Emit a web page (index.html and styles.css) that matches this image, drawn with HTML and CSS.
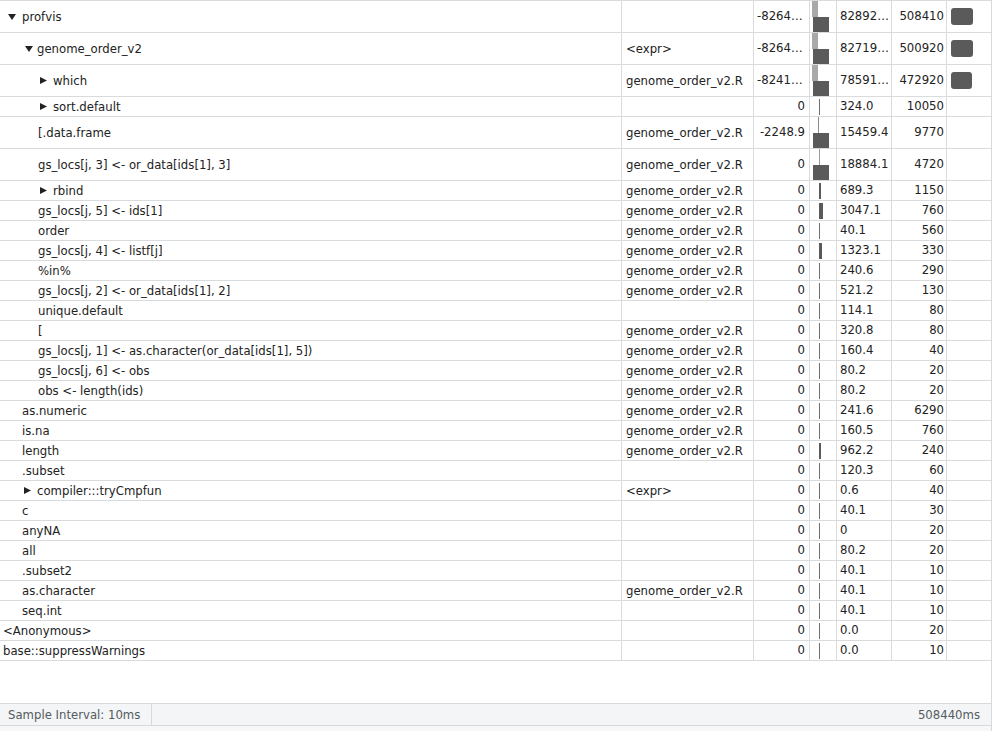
FILE: index.html
```html
<!DOCTYPE html>
<html>
<head>
<meta charset="utf-8">
<link rel="stylesheet" href="styles.css">
</head>
<body>
<div class="app">
  <div class="tree">
    <div class="row tall">
      <div class="c name l0"><svg class="tri-d tri-d0" width="8" height="6" viewBox="0 0 8 6"><polygon points="0,0 8,0 4,6"/></svg>profvis</div>
      <div class="c file"></div>
      <div class="c num">-82641.7</div>
      <div class="c mem"><span class="neg neg-wide"></span><span class="pos-block"></span></div>
      <div class="c val">828926.4</div>
      <div class="c num2">508410</div>
      <div class="c time"><span class="tbar"></span></div>
    </div>
    <div class="row tall">
      <div class="c name l1"><svg class="tri-d" width="8" height="6" viewBox="0 0 8 6"><polygon points="0,0 8,0 4,6"/></svg>genome_order_v2</div>
      <div class="c file">&lt;expr&gt;</div>
      <div class="c num">-82641.7</div>
      <div class="c mem"><span class="neg neg-wide"></span><span class="pos-block"></span></div>
      <div class="c val">827193.5</div>
      <div class="c num2">500920</div>
      <div class="c time"><span class="tbar"></span></div>
    </div>
    <div class="row tall">
      <div class="c name l2"><svg class="tri-r" width="7" height="7" viewBox="0 0 7 7"><polygon points="0,0 7,3.5 0,7"/></svg>which</div>
      <div class="c file">genome_order_v2.R</div>
      <div class="c num">-82417.2</div>
      <div class="c mem"><span class="neg neg-wide"></span><span class="pos-block"></span></div>
      <div class="c val">785912.3</div>
      <div class="c num2">472920</div>
      <div class="c time"><span class="tbar tbar-s"></span></div>
    </div>
    <div class="row">
      <div class="c name l2"><svg class="tri-r" width="7" height="7" viewBox="0 0 7 7"><polygon points="0,0 7,3.5 0,7"/></svg>sort.default</div>
      <div class="c file"></div>
      <div class="c num">0</div>
      <div class="c mem"><span class="pos w1"></span></div>
      <div class="c val">324.0</div>
      <div class="c num2">10050</div>
      <div class="c time"></div>
    </div>
    <div class="row tall">
      <div class="c name l2">[.data.frame</div>
      <div class="c file">genome_order_v2.R</div>
      <div class="c num">-2248.9</div>
      <div class="c mem"><span class="neg neg-thin"></span><span class="pos-block"></span></div>
      <div class="c val">15459.4</div>
      <div class="c num2">9770</div>
      <div class="c time"></div>
    </div>
    <div class="row tall">
      <div class="c name l2">gs_locs[j, 3] &lt;- or_data[ids[1], 3]</div>
      <div class="c file">genome_order_v2.R</div>
      <div class="c num">0</div>
      <div class="c mem"><span class="neg neg-zero"></span><span class="pos-block"></span></div>
      <div class="c val">18884.1</div>
      <div class="c num2">4720</div>
      <div class="c time"></div>
    </div>
    <div class="row">
      <div class="c name l2"><svg class="tri-r" width="7" height="7" viewBox="0 0 7 7"><polygon points="0,0 7,3.5 0,7"/></svg>rbind</div>
      <div class="c file">genome_order_v2.R</div>
      <div class="c num">0</div>
      <div class="c mem"><span class="pos w2"></span></div>
      <div class="c val">689.3</div>
      <div class="c num2">1150</div>
      <div class="c time"></div>
    </div>
    <div class="row">
      <div class="c name l2">gs_locs[j, 5] &lt;- ids[1]</div>
      <div class="c file">genome_order_v2.R</div>
      <div class="c num">0</div>
      <div class="c mem"><span class="pos w4"></span></div>
      <div class="c val">3047.1</div>
      <div class="c num2">760</div>
      <div class="c time"></div>
    </div>
    <div class="row">
      <div class="c name l2">order</div>
      <div class="c file">genome_order_v2.R</div>
      <div class="c num">0</div>
      <div class="c mem"><span class="pos w1"></span></div>
      <div class="c val">40.1</div>
      <div class="c num2">560</div>
      <div class="c time"></div>
    </div>
    <div class="row">
      <div class="c name l2">gs_locs[j, 4] &lt;- listf[j]</div>
      <div class="c file">genome_order_v2.R</div>
      <div class="c num">0</div>
      <div class="c mem"><span class="pos w3"></span></div>
      <div class="c val">1323.1</div>
      <div class="c num2">330</div>
      <div class="c time"></div>
    </div>
    <div class="row">
      <div class="c name l2">%in%</div>
      <div class="c file">genome_order_v2.R</div>
      <div class="c num">0</div>
      <div class="c mem"><span class="pos w1"></span></div>
      <div class="c val">240.6</div>
      <div class="c num2">290</div>
      <div class="c time"></div>
    </div>
    <div class="row">
      <div class="c name l2">gs_locs[j, 2] &lt;- or_data[ids[1], 2]</div>
      <div class="c file">genome_order_v2.R</div>
      <div class="c num">0</div>
      <div class="c mem"><span class="pos w1"></span></div>
      <div class="c val">521.2</div>
      <div class="c num2">130</div>
      <div class="c time"></div>
    </div>
    <div class="row">
      <div class="c name l2">unique.default</div>
      <div class="c file"></div>
      <div class="c num">0</div>
      <div class="c mem"><span class="pos w1"></span></div>
      <div class="c val">114.1</div>
      <div class="c num2">80</div>
      <div class="c time"></div>
    </div>
    <div class="row">
      <div class="c name l2">[</div>
      <div class="c file">genome_order_v2.R</div>
      <div class="c num">0</div>
      <div class="c mem"><span class="pos w1"></span></div>
      <div class="c val">320.8</div>
      <div class="c num2">80</div>
      <div class="c time"></div>
    </div>
    <div class="row">
      <div class="c name l2">gs_locs[j, 1] &lt;- as.character(or_data[ids[1], 5])</div>
      <div class="c file">genome_order_v2.R</div>
      <div class="c num">0</div>
      <div class="c mem"><span class="pos w1"></span></div>
      <div class="c val">160.4</div>
      <div class="c num2">40</div>
      <div class="c time"></div>
    </div>
    <div class="row">
      <div class="c name l2">gs_locs[j, 6] &lt;- obs</div>
      <div class="c file">genome_order_v2.R</div>
      <div class="c num">0</div>
      <div class="c mem"><span class="pos w1"></span></div>
      <div class="c val">80.2</div>
      <div class="c num2">20</div>
      <div class="c time"></div>
    </div>
    <div class="row">
      <div class="c name l2">obs &lt;- length(ids)</div>
      <div class="c file">genome_order_v2.R</div>
      <div class="c num">0</div>
      <div class="c mem"><span class="pos w1"></span></div>
      <div class="c val">80.2</div>
      <div class="c num2">20</div>
      <div class="c time"></div>
    </div>
    <div class="row">
      <div class="c name l1">as.numeric</div>
      <div class="c file">genome_order_v2.R</div>
      <div class="c num">0</div>
      <div class="c mem"><span class="pos w1"></span></div>
      <div class="c val">241.6</div>
      <div class="c num2">6290</div>
      <div class="c time"></div>
    </div>
    <div class="row">
      <div class="c name l1">is.na</div>
      <div class="c file">genome_order_v2.R</div>
      <div class="c num">0</div>
      <div class="c mem"><span class="pos w1"></span></div>
      <div class="c val">160.5</div>
      <div class="c num2">760</div>
      <div class="c time"></div>
    </div>
    <div class="row">
      <div class="c name l1">length</div>
      <div class="c file">genome_order_v2.R</div>
      <div class="c num">0</div>
      <div class="c mem"><span class="pos w2"></span></div>
      <div class="c val">962.2</div>
      <div class="c num2">240</div>
      <div class="c time"></div>
    </div>
    <div class="row">
      <div class="c name l1">.subset</div>
      <div class="c file"></div>
      <div class="c num">0</div>
      <div class="c mem"><span class="pos w1"></span></div>
      <div class="c val">120.3</div>
      <div class="c num2">60</div>
      <div class="c time"></div>
    </div>
    <div class="row">
      <div class="c name l1"><svg class="tri-r" width="7" height="7" viewBox="0 0 7 7"><polygon points="0,0 7,3.5 0,7"/></svg>compiler:::tryCmpfun</div>
      <div class="c file">&lt;expr&gt;</div>
      <div class="c num">0</div>
      <div class="c mem"><span class="pos w1"></span></div>
      <div class="c val">0.6</div>
      <div class="c num2">40</div>
      <div class="c time"></div>
    </div>
    <div class="row">
      <div class="c name l1">c</div>
      <div class="c file"></div>
      <div class="c num">0</div>
      <div class="c mem"><span class="pos w1"></span></div>
      <div class="c val">40.1</div>
      <div class="c num2">30</div>
      <div class="c time"></div>
    </div>
    <div class="row">
      <div class="c name l1">anyNA</div>
      <div class="c file"></div>
      <div class="c num">0</div>
      <div class="c mem"><span class="pos w1"></span></div>
      <div class="c val">0</div>
      <div class="c num2">20</div>
      <div class="c time"></div>
    </div>
    <div class="row">
      <div class="c name l1">all</div>
      <div class="c file"></div>
      <div class="c num">0</div>
      <div class="c mem"><span class="pos w1"></span></div>
      <div class="c val">80.2</div>
      <div class="c num2">20</div>
      <div class="c time"></div>
    </div>
    <div class="row">
      <div class="c name l1">.subset2</div>
      <div class="c file"></div>
      <div class="c num">0</div>
      <div class="c mem"><span class="pos w1"></span></div>
      <div class="c val">40.1</div>
      <div class="c num2">10</div>
      <div class="c time"></div>
    </div>
    <div class="row">
      <div class="c name l1">as.character</div>
      <div class="c file">genome_order_v2.R</div>
      <div class="c num">0</div>
      <div class="c mem"><span class="pos w1"></span></div>
      <div class="c val">40.1</div>
      <div class="c num2">10</div>
      <div class="c time"></div>
    </div>
    <div class="row">
      <div class="c name l1">seq.int</div>
      <div class="c file"></div>
      <div class="c num">0</div>
      <div class="c mem"><span class="pos w1"></span></div>
      <div class="c val">40.1</div>
      <div class="c num2">10</div>
      <div class="c time"></div>
    </div>
    <div class="row">
      <div class="c name l0">&lt;Anonymous&gt;</div>
      <div class="c file"></div>
      <div class="c num">0</div>
      <div class="c mem"><span class="pos w1"></span></div>
      <div class="c val">0.0</div>
      <div class="c num2">20</div>
      <div class="c time"></div>
    </div>
    <div class="row">
      <div class="c name l0">base::suppressWarnings</div>
      <div class="c file"></div>
      <div class="c num">0</div>
      <div class="c mem"><span class="pos w1"></span></div>
      <div class="c val">0.0</div>
      <div class="c num2">10</div>
      <div class="c time"></div>
    </div>
  </div>
  <div class="status">
    <div class="status-left">Sample Interval: 10ms</div>
    <div class="status-right">508440ms</div>
  </div>
  <div class="foot"></div>
</div>
</body>
</html>
```

FILE: styles.css
```css
html, body {
  margin: 0;
  padding: 0;
  background: #ffffff;
}
body {
  font-family: "DejaVu Sans", Verdana, sans-serif;
  font-size: 11.7px;
  color: #222222;
}
.app {
  width: 992px;
  height: 731px;
  display: flex;
  flex-direction: column;
  border-right: 1px solid #d6dadd;
  box-sizing: border-box;
}
.tree {
  flex: 1;
  border-top: 1px solid #d9dcdf;
  overflow: hidden;
}
.row {
  display: grid;
  grid-template-columns: 622px 132px 56px 27px 55px 55px 44px;
  height: 20px;
  border-bottom: 1px solid #d9dcdf;
  box-sizing: border-box;
}
.row.tall {
  height: 32px;
}
.c {
  border-right: 1px solid #d9dcdf;
  box-sizing: border-box;
  white-space: nowrap;
  overflow: hidden;
  text-overflow: ellipsis;
  display: flex;
  align-items: center;
  min-width: 0;
}
.c.time {
  border-right: none;
}
.name.l0 { padding-left: 3px; }
.name.l1 { padding-left: 22px; }
.name.l2 { padding-left: 38px; }
.tri-d {
  flex: none;
  fill: #222222;
  margin-left: 3px;
  margin-right: 4px;
  width: 8px;
  height: 6px;
}
.tri-d0 {
  margin-left: 5px;
  margin-right: 6px;
}
.tri-r {
  flex: none;
  fill: #222222;
  margin-left: 2px;
  margin-right: 6px;
  width: 7px;
  height: 7px;
}
.file {
  padding-left: 4px;
}
.num {
  display: block;
  text-align: right;
  padding-right: 4px;
  padding-left: 3px;
  line-height: 19px;
}
.tall .num,
.tall .val,
.tall .num2 {
  line-height: 31px;
}
.val {
  display: block;
  padding-left: 3px;
  padding-right: 2px;
  line-height: 19px;
}
.num2 {
  display: block;
  text-align: right;
  padding-right: 2px;
  line-height: 19px;
}
.mem {
  flex-direction: column;
  align-items: flex-start;
  justify-content: center;
}
.tall .mem {
  justify-content: space-between;
}
.neg {
  display: block;
  height: 16px;
  background: #a9a9a9;
}
.neg-wide {
  width: 6px;
  margin-left: 2px;
}
.neg-thin {
  width: 1px;
  margin-left: 8px;
  background: #8c8c8c;
}
.neg-zero {
  width: 1px;
  margin-left: 9px;
  background: #9a9a9a;
}
.pos-block {
  display: block;
  width: 16px;
  height: 15px;
  margin-left: 3px;
  background: #5a5a5a;
}
.pos {
  display: block;
  height: 16px;
  margin-left: 9px;
  background: #5a5a5a;
}
.pos.w1 { width: 1px; background: #6e6e6e; }
.pos.w2 { width: 2px; }
.pos.w3 { width: 3px; }
.pos.w4 { width: 4px; }
.time {
  padding-left: 4px;
}
.tbar {
  display: block;
  width: 22px;
  height: 17px;
  border-radius: 3px;
  background: #5a5a5a;
}
.tbar-s {
  width: 21px;
}
.status {
  height: 23px;
  border-top: 1px solid #d6dadd;
  border-bottom: 1px solid #d6dadd;
  box-sizing: border-box;
  background: #f3f5f7;
  display: flex;
  align-items: center;
  color: #555b60;
}
.status-left {
  width: 152px;
  height: 100%;
  box-sizing: border-box;
  padding-left: 8px;
  border-right: 1px solid #d6dadd;
  display: flex;
  align-items: center;
}
.status-right {
  flex: 1;
  text-align: right;
  padding-right: 11px;
}
.foot {
  height: 5px;
  background: #f6f7f8;
}
```
